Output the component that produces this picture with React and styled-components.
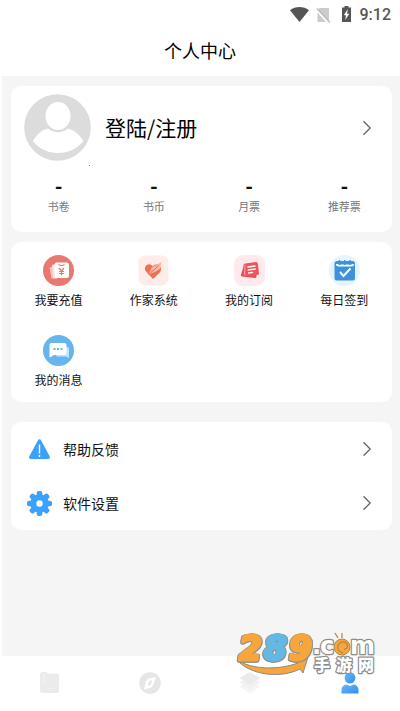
import React from "react";
import styled, { createGlobalStyle } from "styled-components";

const GlobalStyle = createGlobalStyle`
  * { box-sizing: border-box; }
  body {
    margin: 0;
    background: #fff;
    color: #111;
    font-family: "Noto Sans CJK SC", sans-serif;
  }
  button { font: inherit; color: inherit; background: none; border: 0; padding: 0; cursor: pointer; }
  a { color: inherit; text-decoration: none; }
  svg { display: block; flex: none; }
`;

const Page = styled.div`
  display: flex;
  flex-direction: column;
  min-height: 100vh;
`;

const StatusBar = styled.div`
  display: flex;
  align-items: center;
  justify-content: flex-end;
  height: 26px;
  padding: 3px 9px 0 0;
  color: #555;
`;

const Time = styled.time`
  margin-left: 6px;
  font: 500 16px/20px Roboto, sans-serif;
`;

const Header = styled.header`
  display: flex;
  align-items: center;
  justify-content: center;
  height: 50px;
  padding-bottom: 3px;
`;

const Title = styled.h1`
  margin: 0;
  font-size: 18px;
  font-weight: 400;
  line-height: 24px;
  color: #000;
`;

const Content = styled.main`
  display: flex;
  flex: 1;
  flex-direction: column;
  gap: 10px;
  margin-left: 2px;
  padding: 10px 8px 10px 9px;
  background: #f5f5f5;
`;

const Card = styled.section`
  border-radius: 10px;
  background: #fff;
`;

const ListCard = styled(Card)`
  margin-top: 10px;
`;

const Profile = styled.button`
  display: flex;
  align-items: center;
  width: 100%;
  padding: 8px 20px 0 13px;
  text-align: left;
`;

const ProfileName = styled.span`
  flex: 1;
  padding: 0 0 2px 14px;
  font-size: 21px;
  line-height: 30px;
  color: #000;
`;

const Quad = styled.div`
  display: grid;
  grid-template-columns: repeat(4, 1fr);
`;

const Stats = styled(Quad)`
  padding: 16px 0 17px;
`;

const Stat = styled.div`
  display: flex;
  flex-direction: column;
  align-items: center;
`;

const StatValue = styled.span`
  font: 700 20px/20px Roboto, sans-serif;
`;

const StatLabel = styled.span`
  color: #777;
  font-size: 11px;
  line-height: 18px;
`;

const MenuItem = styled.button`
  display: flex;
  flex-direction: column;
  align-items: center;
  gap: 5px;
  height: 80px;
  padding-top: 13px;
  font-size: 12px;
  line-height: 18px;
`;

const Row = styled.button`
  display: flex;
  align-items: center;
  width: 100%;
  height: 54px;
  padding: 0 20px 0 16px;
  text-align: left;
`;

const RowLabel = styled.span`
  flex: 1;
  padding: 0 0 1px 11px;
  font-size: 14px;
  line-height: 20px;
`;

const TabBar = styled.nav`
  position: relative;
  display: grid;
  grid-template-columns: repeat(4, 1fr);
  height: 55px;
  background: #fff;
`;

const Tab = styled.a`
  display: flex;
  align-items: center;
  justify-content: center;
  padding-bottom: 2px;
`;

const Watermark = styled.svg`
  position: absolute;
  right: 20px;
  bottom: 24px;
  pointer-events: none;
`;

const Digits = styled.g`
  font: italic 700 33px "DejaVu Sans", sans-serif;
  stroke-width: 3px;
  filter: drop-shadow(1px 0 0 #929292) drop-shadow(-1px 0 0 #929292)
    drop-shadow(0 1px 0 #929292);
`;

const Chevron = () => (
  <svg width="10" height="16" viewBox="0 0 10 16" fill="none" stroke="#666" strokeWidth="1.3" aria-hidden="true">
    <path d="M1.5 1.2 8.2 8 1.5 14.8" />
  </svg>
);

const StatusIcons = () => (
  <svg width="64" height="20" viewBox="0 0 64 20" aria-hidden="true">
    <path d="M0 5.2C5.5.9 13.5.9 19 5.2L9.5 17Z" fill="#555" />
    <path d="M29.5 3H39v13.5L27.5 5ZM27.5 7.5 36 17h-8.5Z" fill="#ccc" />
    <path d="m27 3.5 13 14" stroke="#bbb" strokeWidth="1.3" />
    <path d="M52 2.5h2.5V1h4v1.5H61V17H52Z" fill="#555" />
    <path d="m57.8 4-4 6.3h2.2L55.3 15l4-6.3h-2.2Z" fill="#fff" />
  </svg>
);

const Avatar = () => (
  <svg width="67" height="67" viewBox="0 0 67 67" overflow="visible" aria-hidden="true">
    <circle cx="33.5" cy="33.5" r="33.3" fill="#dcdcdc" />
    <ellipse cx="34" cy="22" rx="12.5" ry="14" fill="#fff" />
    <path d="M9 47c4-7 9-11 15-12.500 6 5 14 5 20 0 6 1.500 11.500 6 15.500 12.500C53 55 44 59 34 59S15 55 9 47Z" fill="#fff" />
    <path d="M65 71.500h1" stroke="#777" />
  </svg>
);

const RechargeIcon = () => (
  <svg width="31" height="31" viewBox="0 0 31 31" aria-hidden="true">
    <circle cx="15.5" cy="15.5" r="15.5" fill="#e97870" />
    <path d="m6.500 12.500 6-2v12.500l-4 .500Z" fill="#f6c0bb" />
    <path d="m9 10 5-1.500v15h-4Z" fill="#fae0dd" />
    <rect x="11.5" y="7.5" width="14.5" height="15.5" rx="2.5" fill="#fff" />
    <path d="M15.500 9.500q3 2 6 0M16 13l2.500 3 2.500-3M18.500 16v4.500M16 16.500h5M16 18.500h5" fill="none" stroke="#e97870" strokeWidth="1.2" />
  </svg>
);

const AuthorIcon = () => (
  <svg width="31" height="31" viewBox="0 0 31 31" aria-hidden="true">
    <rect x=".5" y=".5" width="30" height="30" rx="7" fill="#fdece8" />
    <path d="M15 24 8 16.500C5 12.500 9 7.500 13 9.700l2 1.500c3-3.200 8-1.200 8 3 0 1.500-.6 2.500-1.500 3.500Z" fill="#ee7053" />
    <path d="m10.500 19.500 3.200-7L23.500 7l-1.500 7-6 3.500Z" fill="#f8b8a6" />
    <path d="m10.500 19.500 6-5 4-4.500" stroke="#ee7053" fill="none" />
  </svg>
);

const SubscribeIcon = () => (
  <svg width="31" height="31" viewBox="0 0 31 31" aria-hidden="true">
    <rect width="31" height="31" rx="9" fill="#feeaec" />
    <path d="m10 10-3 9.500q-.5 1.500 1 2l13 1.500q1.500 0 1.500-1.500V19H10Z" fill="#e74f59" />
    <path d="m11 8.500 11-1.500q1.500 0 1.700 1.300l1.300 10q0 1.400-1.300 1.700l-11.500 1q-1.500 0-1.600-1.400L9.500 10q0-1.300 1.500-1.500Z" fill="#f0535e" />
    <path d="M11 9.500 10.600 20" stroke="#fbc0c4" strokeWidth=".7" />
    <path d="m13.500 12 8-1m-7.800 4 8-1m-7.500 4 5-.6" stroke="#fff" strokeWidth="1.3" />
  </svg>
);

const CheckInIcon = () => (
  <svg width="31" height="31" viewBox="0 0 31 31" aria-hidden="true">
    <circle cx="15.5" cy="15.5" r="15.5" fill="#e5f5ff" />
    <rect x="5.5" y="6" width="20.5" height="19.5" rx="2.5" fill="#3e91da" />
    <path d="M8 9q0 1.500 2 1.500h12q2 0 2-1.500" fill="none" stroke="#fff" strokeWidth="2" />
    <path d="M10.500 5v5M15.700 5v5M21 5v5" stroke="#3e91da" strokeWidth="1.5" />
    <path d="m11 17 3.500 4 7-7.500" fill="none" stroke="#fff" strokeWidth="2" />
  </svg>
);

const MessageIcon = () => (
  <svg width="31" height="31" viewBox="0 0 31 31" aria-hidden="true">
    <circle cx="15.5" cy="15.5" r="15.5" fill="#66b5ee" />
    <path d="M22 12h2q2 0 2 2v9l-3-1.500h-9.500V19Z" fill="#c7e5fa" />
    <path d="M8.500 8h13q2 0 2 2v8q0 2-2 2H11l-4 2.500q-.5 0-.5-1V10q0-2 2-2Z" fill="#fff" />
    <path d="M10.500 14h2m1.500 0h2m1.500 0h2" stroke="#66b5ee" strokeWidth="2" />
  </svg>
);

const HelpIcon = () => (
  <svg width="25" height="25" viewBox="0 0 25 25" aria-hidden="true">
    <path d="M12.500 4 3.700 20.300h17.600Z" fill="#3ca1fb" stroke="#3ca1fb" strokeWidth="3.4" strokeLinejoin="round" />
    <path d="M12.500 7.500v9M12.500 18v2" stroke="#fff" strokeWidth="1.4" />
  </svg>
);

const GearIcon = () => (
  <svg width="25" height="25" viewBox="0 0 25 25" aria-hidden="true">
    <g fill="#3ca1fb">
      {[0, 45, 90, 135, 180, 225, 270, 315].map((angle) => (
        <rect key={angle} x="9.7" y="0" width="5.6" height="8" rx="2" transform={`rotate(${angle} 12.5 12.5)`} />
      ))}
      <circle cx="12.5" cy="12.5" r="9.3" />
    </g>
    <circle cx="12.5" cy="12.5" r="3.2" fill="#fff" />
  </svg>
);

const ShelfIcon = () => (
  <svg width="22" height="22" viewBox="0 0 22 22" aria-hidden="true">
    <path d="M3.500 0H8v1.500h10q2 0 2 2V19q0 2-2 2H3.500q-2.500 0-2.500-2.500V2.500Q1 0 3.500 0Z" fill="#ebebeb" />
    <path d="M5 2v11.500M8.500 16.500H15" stroke="#f3f3f3" />
  </svg>
);

const CompassIcon = () => (
  <svg width="22" height="22" viewBox="0 0 22 22" aria-hidden="true">
    <circle cx="11" cy="11" r="10.8" fill="#e6e6e6" />
    <path d="m17 5-3 8.500q-1 1.500-2.500 2.200L5 17.500l2-8.300Q8.500 7 10 6.500Z" fill="#fff" />
    <ellipse cx="11" cy="11" rx="1.5" ry="3" transform="rotate(25 11 11)" fill="#e6e6e6" />
  </svg>
);

const LayersIcon = () => (
  <svg width="22" height="22" viewBox="0 0 22 22" aria-hidden="true">
    <path d="m11 8 10.500 6.500L11 21.500.5 14.500Z" fill="#f5f5f5" />
    <path d="m11 4 10.500 6.500L11 17 .5 10.500Z" fill="#f1f1f1" />
    <path d="m11 0 10.500 6L11 12.500.5 6Z" fill="#ebebeb" />
  </svg>
);

const UserIcon = () => (
  <svg width="22" height="22" viewBox="0 0 22 22" aria-hidden="true">
    <defs>
      <linearGradient id="user" x1="0" y1="0" x2="1" y2="1">
        <stop stopColor="#6ab9fa" />
        <stop offset="1" stopColor="#318eee" />
      </linearGradient>
    </defs>
    <ellipse cx="11" cy="5.8" rx="5.4" ry="5.8" fill="url(#user)" />
    <path d="M2.500 21.500V18q0-5 5-5.500l3.500 1.500 3.500-1.500q5 .5 5 5.500v3.500Z" fill="url(#user)" />
  </svg>
);

const SiteMark = () => (
  <Watermark width="148" height="64" viewBox="0 -10 148 64" role="img" aria-label="289.com 手游网">
    <path
      d="M5 27c16 10 42 10 61 3l-3-3 13-3-5 16-3-4C48 46 18 42 5 27Z"
      fill="#f6a63c"
      stroke="#8a8a8a"
      strokeLinejoin="round"
    />
    <Digits strokeLinejoin="round">
      <text x="7" y="27" fill="#f6a63c" stroke="#f6a63c">2</text>
      <text x="32" y="27" fill="#63b9e4" stroke="#63b9e4">8</text>
      <text x="57" y="27" fill="#f6a63c" stroke="#f6a63c">9</text>
    </Digits>
    <g fill="#fff" stroke="#8c8c8c" strokeLinejoin="round" paintOrder="stroke">
      <g strokeWidth="2.5" fontFamily="DejaVu Sans, sans-serif" fontWeight="700" fontSize="24">
        <text x="80" y="21">.</text>
        <text x="88" y="21">c</text>
        <text x="118" y="21">m</text>
      </g>
      <g strokeWidth="2.5" fontFamily="Noto Sans CJK SC, sans-serif" fontWeight="900" fontSize="16">
        <text x="82" y="38">手</text>
        <text x="104" y="38">游</text>
        <text x="126" y="38">网</text>
      </g>
    </g>
    <circle cx="110" cy="14" r="8" fill="#f6a63c" stroke="#b48648" />
    <path d="M111 20c-8-2-6-12 1-11 5 1 4 8 0 7M106 5l-3-5M110 5V0" fill="none" stroke="#bd8744" strokeWidth="1.3" />
  </Watermark>
);

const stats = ["书卷", "书币", "月票", "推荐票"];

const menu = [
  ["我要充值", RechargeIcon],
  ["作家系统", AuthorIcon],
  ["我的订阅", SubscribeIcon],
  ["每日签到", CheckInIcon],
  ["我的消息", MessageIcon],
];

const rows = [
  ["帮助反馈", HelpIcon],
  ["软件设置", GearIcon],
];

const tabs = [
  ["书架", ShelfIcon],
  ["发现", CompassIcon],
  ["分类", LayersIcon],
  ["我的", UserIcon],
];

export default function App() {
  return (
    <Page>
      <GlobalStyle />
      <StatusBar>
        <StatusIcons />
        <Time>9:12</Time>
      </StatusBar>
      <Header>
        <Title>个人中心</Title>
      </Header>
      <Content>
        <Card>
          <Profile type="button">
            <Avatar />
            <ProfileName>登陆/注册</ProfileName>
            <Chevron />
          </Profile>
          <Stats>
            {stats.map((label) => (
              <Stat key={label}>
                <StatValue>-</StatValue>
                <StatLabel>{label}</StatLabel>
              </Stat>
            ))}
          </Stats>
        </Card>
        <Card>
          <Quad>
            {menu.map(([label, Icon]) => (
              <MenuItem type="button" key={label}>
                <Icon />
                {label}
              </MenuItem>
            ))}
          </Quad>
        </Card>
        <ListCard>
          {rows.map(([label, Icon]) => (
            <Row type="button" key={label}>
              <Icon />
              <RowLabel>{label}</RowLabel>
              <Chevron />
            </Row>
          ))}
        </ListCard>
      </Content>
      <TabBar>
        {tabs.map(([label, Icon]) => (
          <Tab href="#" aria-label={label} key={label}>
            <Icon />
          </Tab>
        ))}
        <SiteMark />
      </TabBar>
    </Page>
  );
}
